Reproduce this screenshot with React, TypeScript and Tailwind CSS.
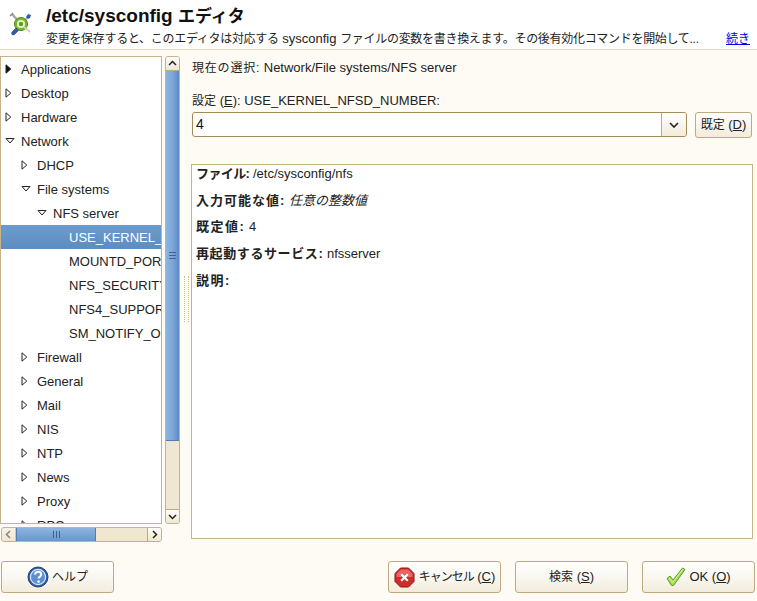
const FONT = "font-['Liberation_Sans','Noto_Sans_CJK_JP',sans-serif]";

type TreeRow = {
  label: string;
  depth: number;
  arrow?: "open" | "closed" | "solid";
  selected?: boolean;
};

const rows: TreeRow[] = [
  { label: "Applications", depth: 0, arrow: "solid" },
  { label: "Desktop", depth: 0, arrow: "closed" },
  { label: "Hardware", depth: 0, arrow: "closed" },
  { label: "Network", depth: 0, arrow: "open" },
  { label: "DHCP", depth: 1, arrow: "closed" },
  { label: "File systems", depth: 1, arrow: "open" },
  { label: "NFS server", depth: 2, arrow: "open" },
  { label: "USE_KERNEL_NFSD_NUMBER", depth: 3, selected: true },
  { label: "MOUNTD_PORT", depth: 3 },
  { label: "NFS_SECURITY_GSS", depth: 3 },
  { label: "NFS4_SUPPORT", depth: 3 },
  { label: "SM_NOTIFY_OPTIONS", depth: 3 },
  { label: "Firewall", depth: 1, arrow: "closed" },
  { label: "General", depth: 1, arrow: "closed" },
  { label: "Mail", depth: 1, arrow: "closed" },
  { label: "NIS", depth: 1, arrow: "closed" },
  { label: "NTP", depth: 1, arrow: "closed" },
  { label: "News", depth: 1, arrow: "closed" },
  { label: "Proxy", depth: 1, arrow: "closed" },
  { label: "RPC", depth: 1, arrow: "closed" },
];

const indents = ["pl-[4px]", "pl-[20px]", "pl-[36px]", "pl-[68px]"];

const Arrow = ({ kind }: { kind: "open" | "closed" | "solid" }) => {
  if (kind === "open") {
    return (
      <svg width="10" height="8" viewBox="0 0 10 8" className="shrink-0 mr-[6px]">
        <path d="M1 1.5h8L5 6z" fill="white" stroke="#222" strokeWidth="1" />
      </svg>
    );
  }
  return (
    <svg width="7" height="10" viewBox="0 0 7 10" className="shrink-0 mr-[9px]">
      <path d="M1 .8v8.4L5.8 5z" fill={kind === "solid" ? "#111" : "white"} stroke="#222" strokeWidth="1" />
    </svg>
  );
};

const Row = ({ row }: { row: TreeRow }) => (
  <div
    className={`h-6 flex items-center whitespace-nowrap ${indents[row.depth]} ${
      row.selected ? "bg-gradient-to-b from-[#6c9bcf] to-[#5c8cc0] text-white" : "text-[#222]"
    }`}
  >
    {row.arrow && <Arrow kind={row.arrow} />}
    <span className="mt-[2px]">{row.label}</span>
  </div>
);

const HelpIcon = () => (
  <svg width="22" height="22" viewBox="0 0 22 22" className="shrink-0">
    <circle cx="11" cy="11" r="10" fill="#2b5ea3" stroke="#1d4480" />
    <circle cx="11" cy="11" r="7.6" fill="#5f8fd0" stroke="#dbe7f6" strokeWidth="1.2" />
    <path d="M8 8.6c.3-2 1.6-2.8 3.2-2.8 1.8 0 3 1 3 2.6 0 2.2-2.6 2.2-2.6 4.2" fill="none" stroke="white" strokeWidth="2" />
    <circle cx="11.6" cy="15.6" r="1.3" fill="white" />
  </svg>
);

const CancelIcon = () => (
  <svg width="21" height="21" viewBox="0 0 21 21" className="shrink-0">
    <path d="M6.5 1h8L20 6.5v8L14.5 20h-8L1 14.5v-8z" fill="#d42a2a" stroke="#8f1414" />
    <path d="M2.5 7 7 2.5h7L18.5 7v3H2.5z" fill="#ee8080" opacity="0.7" />
    <path d="M7.2 7.2l6.6 6.6M13.8 7.2l-6.6 6.6" stroke="white" strokeWidth="2.2" />
  </svg>
);

const OkIcon = () => (
  <svg width="20" height="20" viewBox="0 0 20 20" className="shrink-0">
    <path d="M1 11.5l3-2.5 3 4L16.5 1 19 2.5 7.5 18.5h-2z" fill="#a6dc58" stroke="#5c9a26" strokeWidth="1" />
    <path d="M3 11l3.6 4.6L16.8 2.4" fill="none" stroke="#d8f2ac" strokeWidth="1" />
  </svg>
);

const AppIcon = () => (
  <svg width="24" height="24" viewBox="0 0 24 24">
    <path d="M3 2l8 9" stroke="#a5a5a5" strokeWidth="2.4" fill="none" />
    <path d="M1 4l3-3" stroke="#8a8a8a" strokeWidth="1.4" />
    <path d="M20 4L6 19" stroke="#bcbcbc" strokeWidth="2.2" />
    <path d="M19 2l3 1-1 3-2 1-2-2z" fill="#2f5fa8" />
    <circle cx="12" cy="12" r="6.5" fill="#7ab929" stroke="#4f8a14" />
    <circle cx="12" cy="12" r="4" fill="#e8f6d0" />
    <circle cx="12" cy="12" r="2.2" fill="#5f9e1c" />
    <path d="M15 15l6 5" stroke="#cfcfcf" strokeWidth="2" />
    <path d="M3 20l4-4 2.5 2.5-4 4a2 2 0 0 1-3-1z" fill="#2f5fa8" stroke="#1d3f78" strokeWidth="0.6" />
  </svg>
);

const Chevron = () => (
  <svg width="10" height="6" viewBox="0 0 10 6">
    <path d="M1 1l4 4 4-4" fill="none" stroke="#222" strokeWidth="1.6" />
  </svg>
);

const ArrowBtn = ({ d, className }: { d: string; className: string }) => (
  <div className={`flex items-center justify-center bg-gradient-to-b from-[#fefdfb] to-[#efe7d2] border-[#bfa97f] ${className}`}>
    <svg width="9" height="9" viewBox="0 0 9 9">
      <path d={d} fill="none" stroke="#222" strokeWidth="1.5" />
    </svg>
  </div>
);

const btn =
  "h-[32px] w-[113px] rounded-[3px] border border-[#bfa97f] bg-gradient-to-b from-white via-[#f9f7f1] to-[#f3ecdb] flex items-center justify-center text-[#222]";

const cjk = "text-[12px]";

const App = () => (
  <div className={`w-[757px] h-[601px] overflow-hidden flex flex-col bg-[#fefbf5] text-[13px] ${FONT}`}>
    <header className="h-[50px] shrink-0 bg-white border-b border-[#e2d8bf] flex pl-[9px] pr-[7px]">
      <div className="w-[37px] shrink-0 pt-[12px]">
        <AppIcon />
      </div>
      <div className="flex-1 min-w-0 pt-[3px]">
        <div className="text-[19px] font-bold leading-[26px] text-[#111]">
          /etc/sysconfig <span className="text-[17px]">エディタ</span>
        </div>
        <div className="flex justify-between items-baseline leading-[17px] text-[#222] whitespace-nowrap">
          <span>
            <span className={`${cjk} tracking-[-0.3px]`}>変更を保存すると、このエディタは対応する</span> sysconfig{" "}
            <span className={`${cjk} tracking-[-0.3px]`}>ファイルの変数を書き換えます。その後有効化コマンドを開始して...</span>
          </span>
          <span className={`${cjk} text-[#0000ee] underline`}>続き</span>
        </div>
      </div>
    </header>

    <div className="flex pt-[6px] h-[492px]">
      <div className="w-[181px] shrink-0 flex flex-col">
        <div className="flex h-[468px]">
          <div className="w-[162px] border border-[#c8b288] bg-white overflow-hidden">
            {rows.map((row) => (
              <Row key={row.label} row={row} />
            ))}
          </div>
          <div className="ml-[3px] w-[15px] flex flex-col rounded-[3px] bg-[#efe7d2] border border-[#c8b288] overflow-hidden">
            <ArrowBtn d="M1 6l3.5-3.5L8 6" className="h-[14px] border-b" />
            <div className="h-[370px] bg-gradient-to-r from-[#8db4e0] via-[#7ca6d8] to-[#5d8ac4] border-b border-[#4f7cb8] flex items-center justify-center">
              <svg width="7" height="7" viewBox="0 0 7 7">
                <path d="M0 .5h7M0 3.5h7M0 6.5h7" stroke="#3a6299" />
              </svg>
            </div>
            <div className="flex-1" />
            <ArrowBtn d="M1 3l3.5 3.5L8 3" className="h-[14px] border-t" />
          </div>
        </div>
        <div className="mt-[3px] ml-px w-[161px] h-[15px] flex rounded-[3px] bg-[#efe7d2] border border-[#c8b288] overflow-hidden">
          <ArrowBtn d="M6 1L2.5 4.5 6 8" className="w-[14px] border-r opacity-50" />
          <div className="w-[80px] bg-gradient-to-b from-[#8db4e0] to-[#6a96cc] border-x border-[#4f7cb8] flex items-center justify-center">
            <svg width="7" height="7" viewBox="0 0 7 7">
              <path d="M.5 0v7M3.5 0v7M6.5 0v7" stroke="#3a6299" />
            </svg>
          </div>
          <div className="flex-1" />
          <ArrowBtn d="M3 1l3.5 3.5L3 8" className="w-[14px] border-l" />
        </div>
      </div>

      <div className="w-[11px] shrink-0 flex items-center justify-center">
        <div className="w-[5px] h-[46px] border-x border-dotted border-[#cbbb95]" />
      </div>

      <div className="w-[560px] shrink-0 flex flex-col text-[#222]">
        <div className="pt-[4px] leading-[16px]">
          <span className={`${cjk} tracking-[0.8px]`}>現在の選択:</span> Network/File systems/NFS server
        </div>
        <div className="mt-[17px] leading-[16px]">
          <span className={cjk}>設定</span> (<span className="underline">E</span>): USE_KERNEL_NFSD_NUMBER:
        </div>
        <div className="mt-[3px] flex items-start h-[26px]">
          <div className="w-[495px] h-[25px] flex rounded-[3px] border border-[#a08c58] bg-white overflow-hidden">
            <div className="flex-1 pl-[3px] text-[14px] leading-[23px] text-[#111]">4</div>
            <div className="w-[25px] border-l border-[#bfa97f] bg-gradient-to-b from-white to-[#f3ecdb] flex items-center justify-center">
              <Chevron />
            </div>
          </div>
          <div className="ml-[8px] w-[57px] h-[26px] rounded-[3px] border border-[#bfa97f] bg-gradient-to-b from-white to-[#f3ecdb] flex items-center justify-center whitespace-nowrap">
            <span className={cjk}>既定</span>&nbsp;(<span className="underline">D</span>)
          </div>
        </div>

        <div className="mt-[26px] -ml-px h-[375px] w-[562px] border border-[#c8b288] bg-white px-[4px] pt-[1px]">
          <p className="h-[16px] leading-[15px]">
            <b className="tracking-[-0.6px]">ファイル:</b> /etc/sysconfig/nfs
          </p>
          <p className="mt-[11px] h-[16px] leading-[15px]">
            <b className="tracking-[1px]">入力可能な値:</b> <i>任意の整数値</i>
          </p>
          <p className="mt-[10px] h-[16px] leading-[15px]">
            <b className="tracking-[1.5px]">既定値:</b> 4
          </p>
          <p className="mt-[11px] h-[16px] leading-[15px]">
            <b className="tracking-[0.6px]">再起動するサービス:</b> nfsserver
          </p>
          <p className="mt-[11px] h-[16px] leading-[15px]">
            <b className="tracking-[1.5px]">説明:</b>
          </p>
        </div>
      </div>
    </div>

    <footer className="flex-1 flex items-start pt-[19px] pl-px">
      <div className={`${btn} gap-[3px]`}>
        <HelpIcon />
        <span className={cjk}>ヘルプ</span>
      </div>
      <div className={`${btn} ml-[274px] gap-[4px]`}>
        <CancelIcon />
        <span>
          <span className={`${cjk} tracking-[-1px]`}>キャンセル</span> (<span className="underline">C</span>)
        </span>
      </div>
      <div className={`${btn} ml-[14px]`}>
        <span>
          <span className={cjk}>検索</span> (<span className="underline">S</span>)
        </span>
      </div>
      <div className={`${btn} ml-[14px] border-[#6a8db5] gap-[3px]`}>
        <OkIcon />
        <span>
          OK (<span className="underline">O</span>)
        </span>
      </div>
    </footer>
  </div>
);

export default App;
